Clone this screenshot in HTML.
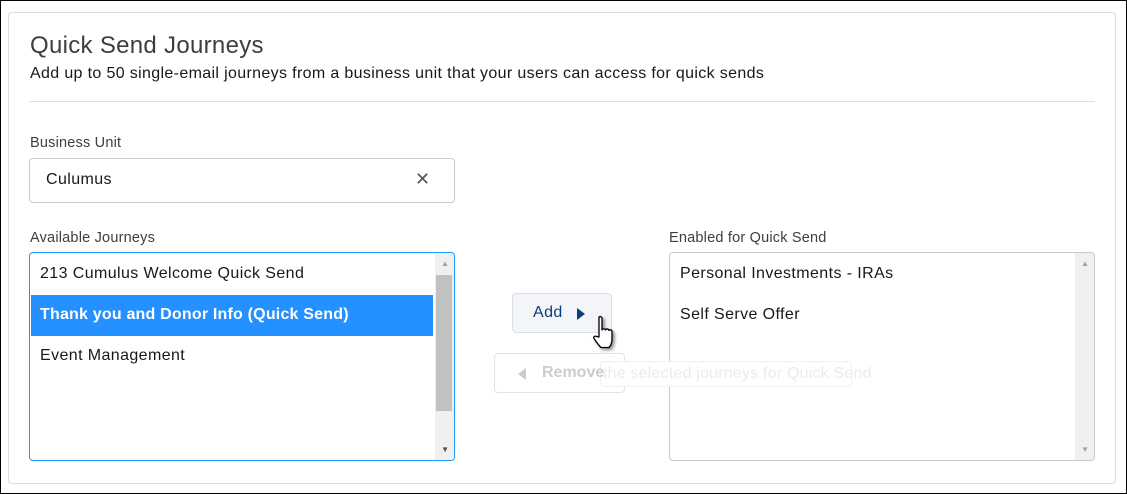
<!DOCTYPE html>
<html><head><style>
body{margin:0;width:1127px;height:494px;background:#fff;font-family:"Liberation Sans",sans-serif;color:#181818;position:relative;overflow:hidden}
.frame{position:absolute;left:0;top:0;width:1125px;height:492px;border:1px solid #000}
.card{position:absolute;left:8px;top:12px;width:1106px;height:470px;border:1px solid #ddd;border-radius:4px}
.a{position:absolute;white-space:nowrap}
.box{position:absolute;border:1px solid #c9c9c9;border-radius:4px;background:#fff}
.lbl{font-size:14.5px;color:#3e3e3c;letter-spacing:.2px}
.item{position:absolute;left:10px;font-size:16px;color:#181818;letter-spacing:.4px;white-space:nowrap}
</style></head><body>
<div class="frame"></div>
<div class="card"></div>
<div class="a" style="left:30px;top:32px;font-size:24px;font-weight:300;color:#3e3e3c;letter-spacing:.3px">Quick Send Journeys</div>
<div class="a" style="left:30px;top:65px;font-size:16px;color:#181818;letter-spacing:.35px">Add up to 50 single-email journeys from a business unit that your users can access for quick sends</div>
<div class="a" style="left:29px;top:101px;width:1066px;height:1px;background:#ddd"></div>
<div class="a lbl" style="left:30px;top:135px">Business Unit</div>
<div class="box" style="left:29px;top:158px;width:424px;height:43px"></div>
<div class="a" style="left:46px;top:171px;font-size:16px;letter-spacing:.4px">Culumus</div>
<div class="a" style="left:415px;top:169px;font-size:18px;color:#555">✕</div>
<div class="a lbl" style="left:30px;top:230px">Available Journeys</div>
<div class="a lbl" style="left:669px;top:230px">Enabled for Quick Send</div>
<div class="box" style="left:29px;top:252px;width:424px;height:207px;border-color:#1b96ff;overflow:hidden">
 <div class="item" style="top:12px">213 Cumulus Welcome Quick Send</div>
 <div style="position:absolute;left:1px;top:42px;width:402px;height:41px;background:#2590ff"></div>
 <div class="item" style="top:53px;color:#fff;font-weight:bold;letter-spacing:.2px">Thank you and Donor Info (Quick Send)</div>
 <div class="item" style="top:94px">Event Management</div>
 <div style="position:absolute;right:0;top:0;width:19px;height:207px;background:#f0f0f0"></div>
 <div style="position:absolute;right:2px;top:22px;width:16px;height:136px;background:#c1c1c1"></div>
 <div style="position:absolute;right:5px;top:6px;font-size:8px;color:#a0a0a0">▲</div>
 <div style="position:absolute;right:5px;bottom:6px;font-size:8px;color:#505050">▼</div>
</div>
<div class="box" style="left:669px;top:252px;width:424px;height:207px;overflow:hidden">
 <div class="item" style="top:12px">Personal Investments - IRAs</div>
 <div class="item" style="top:53px">Self Serve Offer</div>
 <div style="position:absolute;right:0;top:0;width:19px;height:207px;background:#f0f0f0"></div>
 <div style="position:absolute;right:5px;top:6px;font-size:8px;color:#a0a0a0">▲</div>
 <div style="position:absolute;right:5px;bottom:6px;font-size:8px;color:#a0a0a0">▼</div>
</div>
<div class="box" style="left:512px;top:293px;width:98px;height:38px;background:#f3f5f9;border-color:#d8dde6"></div>
<div class="a" style="left:533px;top:304px;font-size:16px;color:#0b3d7a;letter-spacing:.4px">Add</div>
<div class="a" style="left:577px;top:308px;width:0;height:0;border-left:8px solid #0b3d7a;border-top:6px solid transparent;border-bottom:6px solid transparent"></div>
<div class="box" style="left:494px;top:353px;width:129px;height:38px;border-color:#e3e3e3"></div>
<div class="box" style="left:600px;top:361px;width:250px;height:24px;border-color:#f0f0f0"></div>
<div class="a" style="left:518px;top:368px;width:0;height:0;border-right:8px solid #ccc;border-top:6px solid transparent;border-bottom:6px solid transparent"></div>
<div class="a" style="left:542px;top:364px;font-size:16px;color:#ccc;font-weight:bold">Remove</div>
<div class="a" style="left:603px;top:365px;font-size:16px;color:#ebebeb;letter-spacing:.2px">the selected journeys for Quick Send</div>
<svg class="a" style="left:590px;top:314px" width="34" height="40" viewBox="0 0 34 40"><path d="M9 3c1.5-1 3 0 3 1.5V16c.5-1.5 3-1.5 3.5 0 .5-1.5 3-1.5 3.5.5.5-1 3-1 3 1v8c0 4-2 7-3 8H11c-2-2-5-6-7-9-1-1.5 1-3 2.5-2L9 23V4.5z" fill="#fff" stroke="#000" stroke-width="1.3" stroke-linejoin="round" filter="drop-shadow(2px 2px 1.5px rgba(0,0,0,.45))"/></svg>
</body></html>
